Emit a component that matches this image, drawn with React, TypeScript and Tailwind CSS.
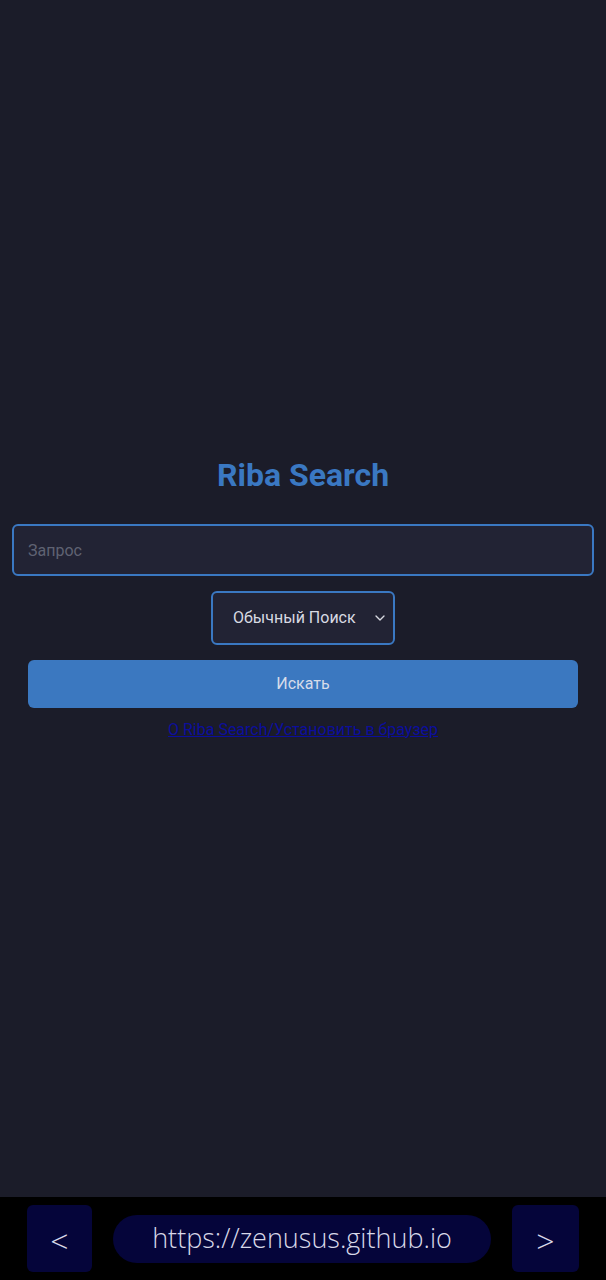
import { ChevronDown } from "lucide-react";

export default function App() {
  return (
    <div className="flex h-[1280px] w-full flex-col bg-[#1b1c29] font-['Roboto',sans-serif]">
      {/* Page */}
      <main className="flex flex-1 flex-col items-center justify-center">
        <h1 className="text-[32px] font-bold leading-[40px] text-[#3a78c2]">Riba Search</h1>

        <div className="mt-[29px] w-full px-3">
          <input
            type="text"
            placeholder="Запрос"
            className="h-[52px] w-full rounded-[6px] border-2 border-[#3a78c2] bg-[#222334] px-[14px] text-base text-[#d0d3dc] outline-none placeholder:text-[#5f6272]"
          />
        </div>

        <div className="mt-[15px] flex h-[54px] w-[184px] items-center justify-between rounded-[6px] border-2 border-[#3a78c2] bg-[#222334] pl-[20px] pr-[5px]">
          <span className="text-base text-[#d8dae2]">Обычный Поиск</span>
          <ChevronDown size={16} strokeWidth={2} className="text-[#d8dae2]" />
        </div>

        <div className="mt-[15px] w-full px-[28px]">
          <button className="h-[48px] w-full rounded-[6px] bg-[#3b78c0] text-base text-[#d6dcea]">
            Искать
          </button>
        </div>

        <a href="#" className="mt-[10px] text-base leading-[24px] text-[#0c0e9c] underline">
          О Riba Search/Установить в браузер
        </a>
      </main>

      {/* Browser bar */}
      <footer className="flex h-[83px] items-center justify-between bg-black px-[27px]">
        <div className="flex h-[67px] w-[65px] items-center justify-center rounded-[6px] bg-[#05053a] pt-[4px] text-[32px] font-light text-[#d8d8e8] font-['Open_Sans',sans-serif]">
          &lt;
        </div>
        <div className="flex h-[48px] w-[378px] items-center justify-center rounded-full bg-[#05053a] text-[27px] font-light text-[#d8d8e8] font-['Open_Sans',sans-serif]">
          https://zenusus.github.io
        </div>
        <div className="flex h-[67px] w-[67px] items-center justify-center rounded-[6px] bg-[#05053a] pt-[4px] text-[32px] font-light text-[#d8d8e8] font-['Open_Sans',sans-serif]">
          &gt;
        </div>
      </footer>
    </div>
  );
}
